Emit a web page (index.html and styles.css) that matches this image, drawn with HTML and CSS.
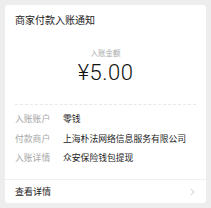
FILE: index.html
```html
<!DOCTYPE html>
<html lang="zh">
<head>
<meta charset="utf-8">
<link rel="stylesheet" href="styles.css">
</head>
<body>
<div class="card">
  <div class="title">商家付款入账通知</div>
  <div class="amount-block">
    <div class="amount-label">入账金额</div>
    <div class="amount">¥5.00</div>
  </div>
  <div class="rows">
    <div class="row"><span class="label">入账账户</span><span class="value">零钱</span></div>
    <div class="row"><span class="label">付款商户</span><span class="value">上海朴法网络信息服务有限公司</span></div>
    <div class="row"><span class="label">入账详情</span><span class="value">众安保险钱包提现</span></div>
  </div>
  <div class="footer">
    <span class="more">查看详情</span>
    <svg class="chev" width="5" height="8" viewBox="0 0 5 8"><path d="M0.8 0.8 L4 4 L0.8 7.2" fill="none" stroke="#c4c4c4" stroke-width="0.9"/></svg>
  </div>
</div>
</body>
</html>
```
FILE: styles.css
```css
html, body {
  margin: 0;
  padding: 0;
  background: #ededed;
}
body {
  padding: 5px;
  font-family: "Noto Sans CJK SC", "Liberation Sans", sans-serif;
}
.card {
  width: 201px;
  background: #fff;
  border-radius: 3px;
  box-sizing: border-box;
}
.title {
  padding: 8px 10px 0 10px;
  font-size: 10px;
  line-height: 14px;
  color: #1a1a1a;
}
.amount-block {
  margin: 0 10px;
  padding-top: 21px;
  padding-bottom: 19px;
  text-align: center;
  border-bottom: 1px dashed #e8e8e8;
}
.amount-label {
  font-size: 7.5px;
  line-height: 10px;
  color: #aaaaaa;
}
.amount {
  margin-top: 3px;
  font-family: "Roboto", "Liberation Sans", sans-serif;
  font-weight: 300;
  font-size: 22px;
  line-height: 24px;
  letter-spacing: 0.5px;
  color: #111;
}
.rows {
  padding: 8px 10px 15px 10px;
  display: flex;
  flex-direction: column;
  gap: 7.5px;
}
.row {
  display: flex;
  font-size: 8.8px;
  line-height: 12px;
}
.label {
  width: 48px;
  flex: none;
  color: #a6a6a6;
}
.value {
  color: #1a1a1a;
  white-space: nowrap;
}
.footer {
  border-top: 1px solid #f0f0f0;
  padding: 0 10px;
  height: 23px;
  display: flex;
  align-items: center;
  justify-content: space-between;
}
.more {
  font-size: 9px;
  color: #1a1a1a;
}
.chev {
  margin-right: 1px;
}
```
